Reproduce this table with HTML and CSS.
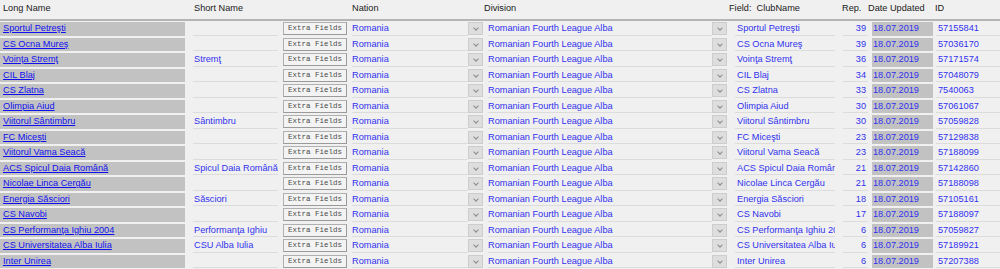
FILE: index.html
```html
<!DOCTYPE html>
<html>
<head>
<meta charset="utf-8">
<link rel="stylesheet" href="styles.css">
</head>
<body>
<div class="grid">
  <div class="head">
    <span>Long Name</span><span>Short Name</span><span>Nation</span><span>Division</span><span>Field:&nbsp; ClubName</span><span>Rep.</span><span>Date Updated</span><span>ID</span>
  </div>
  <div class="rows" id="rows">
    <div class="row"><div class="c-long"><a href="#">Sportul Petreşti</a></div><div class="c-short"></div><div class="c-btn"><button class="xbtn">Extra Fields</button></div><div class="c-nat">Romania</div><div class="arrow"></div><div class="c-div">Romanian Fourth League Alba</div><div class="arrow"></div><div class="c-club">Sportul Petreşti</div><div class="c-rep">39</div><div class="c-date">18.07.2019</div><div class="c-id">57155841</div></div>
    <div class="row"><div class="c-long"><a href="#">CS Ocna Mureş</a></div><div class="c-short"></div><div class="c-btn"><button class="xbtn">Extra Fields</button></div><div class="c-nat">Romania</div><div class="arrow"></div><div class="c-div">Romanian Fourth League Alba</div><div class="arrow"></div><div class="c-club">CS Ocna Mureş</div><div class="c-rep">39</div><div class="c-date">18.07.2019</div><div class="c-id">57036170</div></div>
    <div class="row"><div class="c-long"><a href="#">Voinţa Stremţ</a></div><div class="c-short">Stremţ</div><div class="c-btn"><button class="xbtn">Extra Fields</button></div><div class="c-nat">Romania</div><div class="arrow"></div><div class="c-div">Romanian Fourth League Alba</div><div class="arrow"></div><div class="c-club">Voinţa Stremţ</div><div class="c-rep">36</div><div class="c-date">18.07.2019</div><div class="c-id">57171574</div></div>
    <div class="row"><div class="c-long"><a href="#">CIL Blaj</a></div><div class="c-short"></div><div class="c-btn"><button class="xbtn">Extra Fields</button></div><div class="c-nat">Romania</div><div class="arrow"></div><div class="c-div">Romanian Fourth League Alba</div><div class="arrow"></div><div class="c-club">CIL Blaj</div><div class="c-rep">34</div><div class="c-date">18.07.2019</div><div class="c-id">57048079</div></div>
    <div class="row"><div class="c-long"><a href="#">CS Zlatna</a></div><div class="c-short"></div><div class="c-btn"><button class="xbtn">Extra Fields</button></div><div class="c-nat">Romania</div><div class="arrow"></div><div class="c-div">Romanian Fourth League Alba</div><div class="arrow"></div><div class="c-club">CS Zlatna</div><div class="c-rep">33</div><div class="c-date">18.07.2019</div><div class="c-id">7540063</div></div>
    <div class="row"><div class="c-long"><a href="#">Olimpia Aiud</a></div><div class="c-short"></div><div class="c-btn"><button class="xbtn">Extra Fields</button></div><div class="c-nat">Romania</div><div class="arrow"></div><div class="c-div">Romanian Fourth League Alba</div><div class="arrow"></div><div class="c-club">Olimpia Aiud</div><div class="c-rep">30</div><div class="c-date">18.07.2019</div><div class="c-id">57061067</div></div>
    <div class="row"><div class="c-long"><a href="#">Viitorul Sântimbru</a></div><div class="c-short">Sântimbru</div><div class="c-btn"><button class="xbtn">Extra Fields</button></div><div class="c-nat">Romania</div><div class="arrow"></div><div class="c-div">Romanian Fourth League Alba</div><div class="arrow"></div><div class="c-club">Viitorul Sântimbru</div><div class="c-rep">30</div><div class="c-date">18.07.2019</div><div class="c-id">57059828</div></div>
    <div class="row"><div class="c-long"><a href="#">FC Miceşti</a></div><div class="c-short"></div><div class="c-btn"><button class="xbtn">Extra Fields</button></div><div class="c-nat">Romania</div><div class="arrow"></div><div class="c-div">Romanian Fourth League Alba</div><div class="arrow"></div><div class="c-club">FC Miceşti</div><div class="c-rep">23</div><div class="c-date">18.07.2019</div><div class="c-id">57129838</div></div>
    <div class="row"><div class="c-long"><a href="#">Viitorul Vama Seacă</a></div><div class="c-short"></div><div class="c-btn"><button class="xbtn">Extra Fields</button></div><div class="c-nat">Romania</div><div class="arrow"></div><div class="c-div">Romanian Fourth League Alba</div><div class="arrow"></div><div class="c-club">Viitorul Vama Seacă</div><div class="c-rep">23</div><div class="c-date">18.07.2019</div><div class="c-id">57188099</div></div>
    <div class="row"><div class="c-long"><a href="#">ACS Spicul Daia Română</a></div><div class="c-short">Spicul Daia Română</div><div class="c-btn"><button class="xbtn">Extra Fields</button></div><div class="c-nat">Romania</div><div class="arrow"></div><div class="c-div">Romanian Fourth League Alba</div><div class="arrow"></div><div class="c-club">ACS Spicul Daia Română</div><div class="c-rep">21</div><div class="c-date">18.07.2019</div><div class="c-id">57142860</div></div>
    <div class="row"><div class="c-long"><a href="#">Nicolae Linca Cergău</a></div><div class="c-short"></div><div class="c-btn"><button class="xbtn">Extra Fields</button></div><div class="c-nat">Romania</div><div class="arrow"></div><div class="c-div">Romanian Fourth League Alba</div><div class="arrow"></div><div class="c-club">Nicolae Linca Cergău</div><div class="c-rep">21</div><div class="c-date">18.07.2019</div><div class="c-id">57188098</div></div>
    <div class="row"><div class="c-long"><a href="#">Energia Săsciori</a></div><div class="c-short">Săsciori</div><div class="c-btn"><button class="xbtn">Extra Fields</button></div><div class="c-nat">Romania</div><div class="arrow"></div><div class="c-div">Romanian Fourth League Alba</div><div class="arrow"></div><div class="c-club">Energia Săsciori</div><div class="c-rep">18</div><div class="c-date">18.07.2019</div><div class="c-id">57105161</div></div>
    <div class="row"><div class="c-long"><a href="#">CS Navobi</a></div><div class="c-short"></div><div class="c-btn"><button class="xbtn">Extra Fields</button></div><div class="c-nat">Romania</div><div class="arrow"></div><div class="c-div">Romanian Fourth League Alba</div><div class="arrow"></div><div class="c-club">CS Navobi</div><div class="c-rep">17</div><div class="c-date">18.07.2019</div><div class="c-id">57188097</div></div>
    <div class="row"><div class="c-long"><a href="#">CS Performanţa Ighiu 2004</a></div><div class="c-short">Performanţa Ighiu</div><div class="c-btn"><button class="xbtn">Extra Fields</button></div><div class="c-nat">Romania</div><div class="arrow"></div><div class="c-div">Romanian Fourth League Alba</div><div class="arrow"></div><div class="c-club">CS Performanţa Ighiu 2004</div><div class="c-rep">6</div><div class="c-date">18.07.2019</div><div class="c-id">57059827</div></div>
    <div class="row"><div class="c-long"><a href="#">CS Universitatea Alba Iulia</a></div><div class="c-short">CSU Alba Iulia</div><div class="c-btn"><button class="xbtn">Extra Fields</button></div><div class="c-nat">Romania</div><div class="arrow"></div><div class="c-div">Romanian Fourth League Alba</div><div class="arrow"></div><div class="c-club">CS Universitatea Alba Iulia</div><div class="c-rep">6</div><div class="c-date">18.07.2019</div><div class="c-id">57189921</div></div>
    <div class="row"><div class="c-long"><a href="#">Inter Unirea</a></div><div class="c-short"></div><div class="c-btn"><button class="xbtn">Extra Fields</button></div><div class="c-nat">Romania</div><div class="arrow"></div><div class="c-div">Romanian Fourth League Alba</div><div class="arrow"></div><div class="c-club">Inter Unirea</div><div class="c-rep">6</div><div class="c-date">18.07.2019</div><div class="c-id">57207388</div></div>
  </div>
</div>
</body>
</html>
```

FILE: styles.css
```css
html, body {
  margin: 0;
  padding: 0;
  background: #f0f0f0;
}
body {
  font-family: "Liberation Sans", Arial, sans-serif;
  font-size: 9.2px;
  color: #1a1a1a;
  overflow: hidden;
}
.head {
  display: grid;
  grid-template-columns: 191px 158px 132px 245px 113px 26px 67px 1fr;
  padding-left: 3px;
  height: 19px;
  line-height: 17px;
  border-bottom: 2px solid #b4b4b4;
  background: #f0f0f0;
  white-space: nowrap;
}
.rows {
  display: flex;
  flex-direction: column;
  gap: 2px;
  padding-top: 1px;
}
.row {
  display: flex;
  height: 13.5px;
  line-height: 13px;
  color: #3030ee;
  white-space: nowrap;
}
.row > div {
  overflow: hidden;
  flex: none;
  box-sizing: border-box;
}
.c-long {
  width: 185px;
  background: #c2c2c2;
  padding-left: 3px;
}
.c-long a {
  color: #1010ee;
  text-decoration: underline;
}
.c-short, .c-nat, .c-div, .c-club, .c-rep, .c-id {
  border-bottom: 1.5px solid #dcdcdc;
}
.c-short {
  margin-left: 8px;
  width: 85px;
  padding-left: 1px;
}
.c-btn {
  margin-left: 5px;
  width: 64px;
}
.xbtn {
  display: block;
  width: 64px;
  height: 13px;
  margin: 0;
  padding: 0;
  border: 1px solid #b0b0b0;
  border-right-color: #9a9a9a;
  border-bottom-color: #9a9a9a;
  background: #f3f3f3;
  font-family: "Liberation Mono", "Courier New", monospace;
  font-size: 7.5px;
  color: #4a4a4a;
  line-height: 11px;
  text-align: center;
}
.c-nat {
  margin-left: 5px;
  width: 116px;
}
.arrow {
  width: 15px;
  height: 13px;
  background: #dedede;
  border: 1px solid #cdcdcd;
  position: relative;
}
.arrow::after {
  content: "";
  position: absolute;
  left: 5px;
  top: 3px;
  width: 3px;
  height: 3px;
  border-right: 1px solid #8a8a8a;
  border-bottom: 1px solid #8a8a8a;
  transform: rotate(45deg);
}
.c-div {
  margin-left: 5px;
  width: 224px;
}
.c-club {
  margin-left: 8px;
  width: 100px;
  padding-left: 2px;
}
.c-rep {
  margin-left: 8px;
  width: 25px;
  text-align: right;
  padding-right: 2px;
}
.c-date {
  margin-left: 4px;
  width: 61px;
  background: #c2c2c2;
  padding-left: 1px;
}
.c-id {
  margin-left: 3px;
  width: 64px;
  padding-left: 2px;
}
```
